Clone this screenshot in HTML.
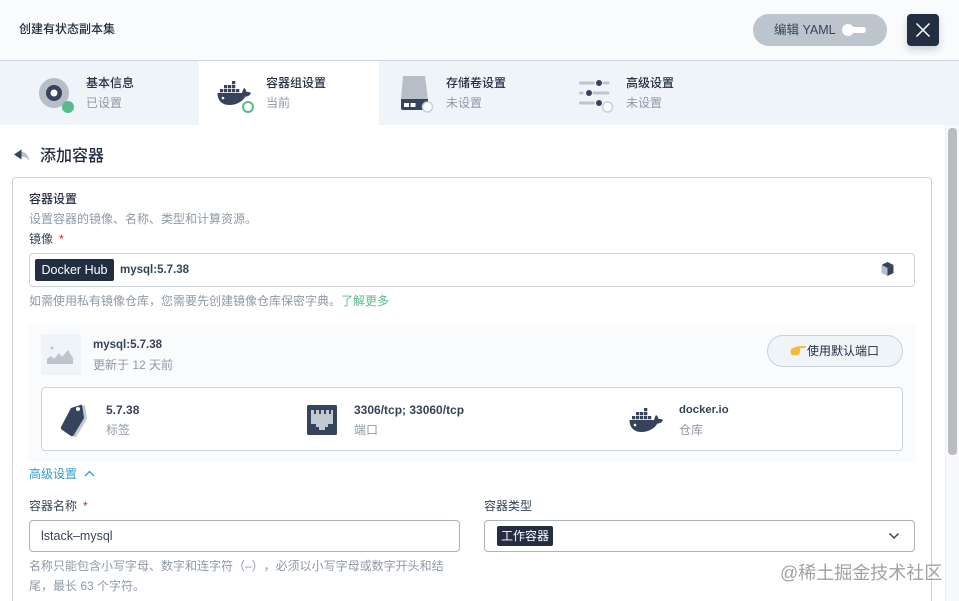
<!DOCTYPE html>
<html lang="zh">
<head>
<meta charset="utf-8">
<title>创建有状态副本集</title>
<style>
html,body{margin:0;padding:0;background:#fff;overflow:hidden;width:959px;height:601px}
body{font-family:"Liberation Sans","Noto Sans CJK SC",sans-serif;font-size:12px;color:#36435c;text-spacing-trim:space-all}
#root{position:relative;width:959px;height:601px;overflow:hidden;filter:blur(.3px)}
.a{position:absolute}
.t{position:absolute;line-height:20px;height:20px;white-space:nowrap}
.h{font-weight:500;color:#242e42}
.g{color:#8f99a8}
.b{font-weight:700;color:#36435c;font-size:11.5px}
.box{position:absolute;box-sizing:border-box;border:1px solid #ccd3db;border-radius:4px;background:#fff}
svg{position:absolute;display:block}
</style>
</head>
<body>
<div id="root">
<svg width="0" height="0" style="left:0;top:0">
<defs>
<symbol id="whale" viewBox="0 0 34 24">
<path fill="#36435c" d="M15 0h3.300v3.300h-3.300zM7 4h3.300v3.300H7zM11 4h3.300v3.300h-3.300zM15 4h3.300v3.300h-3.300zM3 8h3.300v3.300H3zM7 8h3.300v3.300H7zM11 8h3.300v3.300h-3.300zM15 8h3.300v3.300h-3.300zM19 8h3.300v3.300h-3.300z"/>
<path fill="#36435c" d="M.5 12H25c.5-2 1-3.500 2-5 1.500 1 2.300 2.300 2.300 4 1.500-.3 3-.1 4.700 1-1.500 3-3.500 3.500-5.500 3.500-3 5-9 8.500-16 8.500C4 24 .5 18.500 .5 12z"/>
<circle cx="6" cy="17" r="1.300" fill="#fff"/>
</symbol>
</defs>
</svg>

<!-- header -->
<div class="a" style="left:0;top:0;width:959px;height:60px;background:#f9fbfd"></div>
<div class="a" style="left:0;top:60px;width:959px;height:1px;background:#ccd3db"></div>
<div class="t h" style="left:19px;top:19px">创建有状态副本集</div>

<div class="a" style="left:753px;top:14px;width:134px;height:32px;border-radius:16px;background:#bcc4cd"></div>
<div class="t" style="left:774px;top:20px;color:#36435c;font-size:12.5px">编辑 YAML</div>
<div class="a" style="left:848px;top:27px;width:18px;height:6px;border-radius:3px;background:#fff"></div>
<div class="a" style="left:842px;top:24px;width:12px;height:12px;border-radius:50%;background:#fff"></div>

<div class="a" style="left:907px;top:14px;width:32px;height:32px;border-radius:4px;background:#242e42;box-shadow:0 4px 8px rgba(36,46,66,.2)"></div>
<svg style="left:907px;top:14px" width="32" height="32" viewBox="0 0 32 32"><path d="M9.500 9.500l13 13M22.500 9.500l-13 13" stroke="#fff" stroke-width="1.500" fill="none"/></svg>

<!-- tabs -->
<div class="a" style="left:0;top:61px;width:959px;height:64px;background:#eff4f9"></div>
<div class="a" style="left:199px;top:61px;width:180px;height:64px;background:#fff"></div>

<svg style="left:36px;top:76px" width="40" height="40" viewBox="0 0 40 40">
<circle cx="18" cy="17" r="15" fill="#b6bec7"/>
<circle cx="18" cy="17" r="8" fill="#36435c"/>
<circle cx="18" cy="17" r="3.500" fill="#fff"/>
<circle cx="32" cy="31" r="6" fill="#55bc8a"/>
</svg>
<div class="t h" style="left:86px;top:73px">基本信息</div>
<div class="t g" style="left:86px;top:93px">已设置</div>

<svg style="left:217px;top:81px" width="34" height="24"><use href="#whale"/></svg>
<div class="a" style="left:242px;top:101px;width:12px;height:12px;box-sizing:border-box;border:2px solid #55bc8a;border-radius:50%;background:#fff"></div>
<div class="t h" style="left:266px;top:73px">容器组设置</div>
<div class="t g" style="left:266px;top:93px">当前</div>

<svg style="left:400px;top:75px" width="36" height="40" viewBox="0 0 36 40">
<path d="M3 1h22l3 24H1z" fill="#b6bec7"/>
<path d="M1 24h27v9a2 2 0 0 1-2 2H3a2 2 0 0 1-2-2z" fill="#36435c"/>
<path d="M4 28h5v4H4zM10.500 28h5v4h-5z" fill="#fff"/>
<circle cx="27.500" cy="32" r="5" fill="#fff" stroke="#c8d0d8" stroke-width="1.500"/>
</svg>
<div class="t h" style="left:446px;top:73px">存储卷设置</div>
<div class="t g" style="left:446px;top:93px">未设置</div>

<svg style="left:578px;top:78px" width="38" height="36" viewBox="0 0 38 36">
<g stroke="#bcc4cd" stroke-width="3" stroke-linecap="round" fill="none">
<path d="M2.500 5h13M26 5h4M2.500 15h1.500M16 15h14M2.500 25h13"/>
</g>
<circle cx="21" cy="5" r="3" fill="#36435c"/>
<circle cx="11" cy="15" r="3" fill="#36435c"/>
<circle cx="21" cy="25" r="3" fill="#36435c"/>
<circle cx="29.500" cy="29" r="5" fill="#fff" stroke="#c8d0d8" stroke-width="1.500"/>
</svg>
<div class="t h" style="left:626px;top:73px">高级设置</div>
<div class="t g" style="left:626px;top:93px">未设置</div>

<!-- scrollbar -->
<div class="a" style="left:945px;top:125px;width:14px;height:476px;background:#f8f9fa;border-left:1px solid #eceff2;box-sizing:border-box"></div>
<div class="a" style="left:948px;top:128px;width:9px;height:327px;border-radius:4px;background:#bbbcbd"></div>

<!-- page heading -->
<svg style="left:14px;top:149px" width="16" height="13" viewBox="0 0 16 13">
<path d="M6 2.500c4 0 8.500 2.500 9.500 9.500-2-3-5-4.500-9.500-4.500z" fill="#b6bec7"/>
<path d="M7.500 .500v10L0 5.500z" fill="#36435c"/>
</svg>
<div class="t" style="left:40px;top:147px;font-size:16px;font-weight:500;color:#242e42">添加容器</div>

<!-- card -->
<div class="a" style="left:12px;top:177px;width:920px;height:440px;box-sizing:border-box;border:1px solid #ccd3db;border-radius:4px;background:#fff"></div>
<div class="t h" style="left:29px;top:189px">容器设置</div>
<div class="t g" style="left:29px;top:209px">设置容器的镜像、名称、类型和计算资源。</div>
<div class="t" style="left:29px;top:229px">镜像</div>
<div class="t" style="left:59px;top:229px;color:#ca2621">*</div>

<div class="box" style="left:29px;top:253px;width:886px;height:34px"></div>
<div class="a" style="left:35px;top:259px;width:79px;height:22px;border-radius:2px;background:#242e42;color:#fff;line-height:22px;text-align:center;font-size:12.5px">Docker Hub</div>
<div class="t b" style="left:120px;top:260px">mysql:5.7.38</div>
<svg style="left:881px;top:262px" width="13" height="14" viewBox="0 0 13 14">
<path d="M6.500 0l6 3-6 3-6-3z" fill="#36435c"/>
<path d="M.500 3l6 3v8l-6-3z" fill="#b6bec7"/>
<path d="M12.500 3l-6 3v8l6-3z" fill="#36435c"/>
</svg>

<div class="t g" style="left:29px;top:291px">如需使用私有镜像仓库，您需要先创建镜像仓库保密字典。<span style="color:#55bc8a">了解更多</span></div>

<!-- image panel -->
<div class="a" style="left:28px;top:324px;width:888px;height:138px;background:#f9fbfd"></div>
<div class="a" style="left:41px;top:334px;width:40px;height:41px;background:#eff4f9;border-radius:2px"></div>
<svg style="left:47px;top:345px" width="28" height="20" viewBox="0 0 28 20">
<circle cx="5" cy="3" r="1.500" fill="#bcc4cd"/>
<path d="M0 19v-5l4-3 3 3 5-6 3 4 6-7 3 5 2 3v6z" fill="#bcc4cd"/>
</svg>
<div class="t b" style="left:93px;top:335px">mysql:5.7.38</div>
<div class="t g" style="left:93px;top:355px">更新于 12 天前</div>

<div class="a" style="left:767px;top:335px;width:136px;height:32px;box-sizing:border-box;border:1px solid #c9d1d9;border-radius:16px;background:#eff4f9"></div>
<svg style="left:790px;top:345px" width="17" height="12" viewBox="0 0 17 12">
<path d="M1 4c2-1 4-2 6-2.500 3-.5 6-.5 9-.5v1.500l-6 1c.5 2 0 4-1 6-2 1-5 1-7 .5C.500 9 0 6 1 4z" fill="#f4bc3c"/>
</svg>
<div class="t" style="left:807px;top:341px;color:#242e42">使用默认端口</div>

<div class="box" style="left:41px;top:387px;width:862px;height:64px"></div>
<svg style="left:58px;top:402px" width="32" height="36" viewBox="0 0 32 36">
<path d="M16 6.500L27 3l2 13.500L18.500 34.500Q17 35.500 16 35L6.500 28.500Z" fill="#c1c9d1"/>
<path d="M13 6L24 2.500 26 16 15.500 33.500Q14 34.500 13 34L3.500 27.500Q2.500 26 3 25Z" fill="#36435c"/>
<circle cx="20" cy="7" r="2" fill="#fff"/>
</svg>
<div class="t b" style="left:106px;top:400px;font-size:12px">5.7.38</div>
<div class="t g" style="left:106px;top:420px">标签</div>

<svg style="left:307px;top:405px" width="30" height="30" viewBox="0 0 30 30">
<rect width="30" height="30" rx="1.500" fill="#36435c"/>
<path d="M4 5h22v14h-5v3h-3v3h-6v-3H9v-3H4z" fill="#c1c9d1"/>
<path d="M7 5h2v4H7zM12 5h2v4h-2zM17 5h2v4h-2zM22 5h2v4h-2z" fill="#36435c"/>
</svg>
<div class="t b" style="left:354px;top:400px;font-size:12px">3306/tcp; 33060/tcp</div>
<div class="t g" style="left:354px;top:420px">端口</div>

<svg style="left:629px;top:408px" width="34" height="24"><use href="#whale"/></svg>
<div class="t b" style="left:679px;top:400px;font-size:11.3px">docker.io</div>
<div class="t g" style="left:679px;top:420px">仓库</div>

<div class="t" style="left:29px;top:464px;color:#329dce">高级设置</div>
<svg style="left:84px;top:469px" width="11" height="9" viewBox="0 0 11 9"><path d="M1 7l4.500-4.500L10 7" stroke="#329dce" stroke-width="1.300" fill="none"/></svg>

<!-- form -->
<div class="t" style="left:29px;top:496px">容器名称</div>
<div class="t" style="left:83px;top:496px;color:#ca2621">*</div>
<div class="box" style="left:29px;top:520px;width:431px;height:32px;border-color:#abb4be"></div>
<div class="t" style="left:41px;top:526px;font-weight:500;font-size:12.5px">lstack–mysql</div>
<div class="t g" style="left:29px;top:556px">名称只能包含小写字母、数字和连字符（–），必须以小写字母或数字开头和结</div>
<div class="t g" style="left:29px;top:576px">尾，最长 63 个字符。</div>

<div class="t" style="left:484px;top:496px">容器类型</div>
<div class="box" style="left:484px;top:520px;width:431px;height:32px;border-color:#abb4be"></div>
<div class="a" style="left:497px;top:526px;width:56px;height:20px;border-radius:2px;background:#242e42;color:#fff;line-height:20px;text-align:center">工作容器</div>
<svg style="left:888px;top:531px" width="12" height="10" viewBox="0 0 12 10"><path d="M1.500 2.500L6 7l4.500-4.500" stroke="#36435c" stroke-width="1.500" fill="none"/></svg>

<!-- watermark -->
<div class="t" style="left:780px;top:561px;height:24px;line-height:24px;font-size:18px;color:rgba(130,130,130,.75);text-shadow:1px 1px 0 rgba(255,255,255,.6)">@稀土掘金技术社区</div>
</div>
</body>
</html>
